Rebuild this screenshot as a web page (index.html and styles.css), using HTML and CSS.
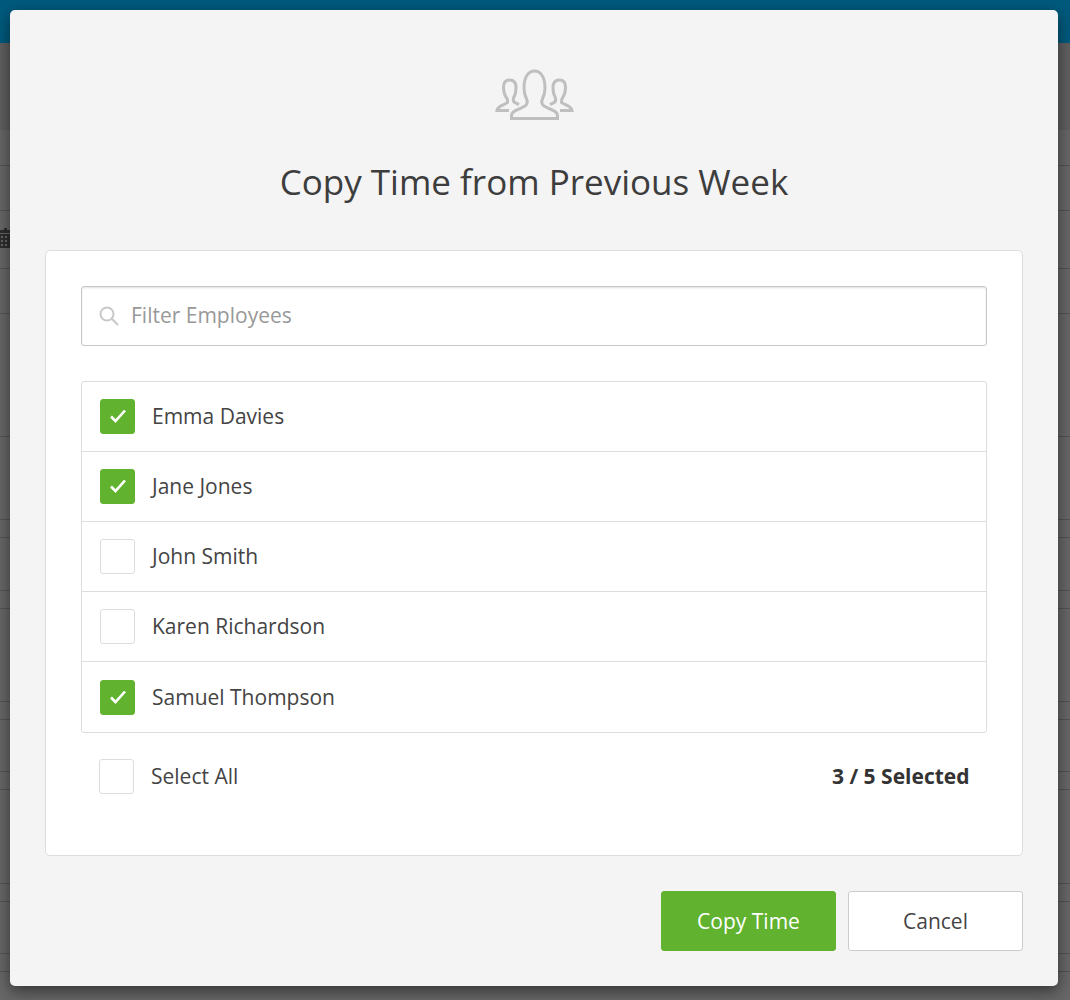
FILE: index.html
```html
<!DOCTYPE html>
<html lang="en">
<head>
<meta charset="UTF-8">
<meta name="viewport" content="width=device-width, initial-scale=1.0">
<title>Copy Time from Previous Week</title>
<link rel="stylesheet" href="styles.css">
</head>
<body>

<!-- Page behind the dialog, dimmed -->
<div class="backdrop">
    <div class="top-bar"></div>
    <div class="toolbar"></div>
    <div class="rows">
        <div></div>
        <div></div>
        <div class="row-calendar">
            <svg class="calendar-icon" viewBox="0 0 10 20">
                <rect x="4" y="0" width="3" height="3"></rect>
                <rect x="0" y="2" width="10" height="3"></rect>
                <path d="M0 6h10v14H0zM1 8v2h2V8zm4 0v2h2V8zM1 12v2h2v-2zm4 0v2h2v-2zM1 16v2h2v-2zm4 0v2h2v-2z" fill-rule="evenodd"></path>
            </svg>
        </div>
        <div></div><div></div><div></div><div></div><div></div><div></div>
        <div></div><div></div><div></div><div></div><div></div><div></div>
        <div></div><div></div><div></div>
    </div>
</div>

<div class="modal">
    <svg class="modal-icon" viewBox="-1 0 80 52">
        <path d="M16.500 49.500H62.500V46.500C62.500 43 59 41.500 55 40L49 37C47 35.500 46 33 47.500 30C49 27 50 24 50 19C50 7 45 2 39.500 2C34 2 29 7 29 19C29 24 30 27 31.500 30C33 33 32 35.500 30 37L24 40C20 41.500 16.500 43 16.500 46.500Z"></path>
        <path d="M14 41.500H2C2.500 38.500 5 37 9 35.500L12.500 33.500C13 31.500 12.500 30 11 28C9 25 8.500 21 8.500 18C8.500 13 10.500 11 14.500 11C18.500 11 21 13.500 21 18.500C21 22.500 20 26.500 18.500 29C18 31 18.500 33 20.500 34L24 35.500"></path>
        <path d="M65 41.500H77C76.500 38.500 74 37 70 35.500L66.500 33.500C66 31.500 66.500 30 68 28C70 25 70.500 21 70.500 18C70.500 13 68.500 11 64.500 11C60.500 11 58 13.500 58 18.500C58 22.500 59 26.500 60.500 29C61 31 60.500 33 58.500 34L55 35.500"></path>
    </svg>
    <h1 class="modal-title">Copy Time from Previous Week</h1>

    <div class="panel">
        <div class="filter">
            <svg class="search-icon" viewBox="0 0 20 20">
                <circle cx="8" cy="8" r="6.500"></circle>
                <path d="M12.800 12.800L19 19"></path>
            </svg>
            <input class="filter-input" type="text" placeholder="Filter Employees">
        </div>

        <ul class="employee-list">
            <li class="employee">
                <span class="check checked"><svg viewBox="0 1 16 14"><path d="M1 7.500L5.500 12L15 1.500"></path></svg></span>
                <span class="label">Emma Davies</span>
            </li>
            <li class="employee">
                <span class="check checked"><svg viewBox="0 1 16 14"><path d="M1 7.500L5.500 12L15 1.500"></path></svg></span>
                <span class="label">Jane Jones</span>
            </li>
            <li class="employee">
                <span class="check"></span>
                <span class="label">John Smith</span>
            </li>
            <li class="employee">
                <span class="check"></span>
                <span class="label">Karen Richardson</span>
            </li>
            <li class="employee">
                <span class="check checked"><svg viewBox="0 1 16 14"><path d="M1 7.500L5.500 12L15 1.500"></path></svg></span>
                <span class="label">Samuel Thompson</span>
            </li>
        </ul>

        <div class="select-all">
            <span class="check"></span>
            <span class="label">Select All</span>
            <span class="label selected-count">3 / 5 Selected</span>
        </div>
    </div>

    <div class="actions">
        <button class="btn btn-primary">Copy Time</button>
        <button class="btn btn-default">Cancel</button>
    </div>
</div>

</body>
</html>
```

FILE: styles.css
```css
* {
    box-sizing: border-box;
}
body {
    font-family: "Open Sans", "Liberation Sans", sans-serif;
    margin: 0;
    height: 1000px;
    overflow: hidden;
    background-color: #676767;
    color: #444;
}

/* dimmed page */
.top-bar {
    height: 43px;
    background-color: #005a7d;
}
.toolbar {
    height: 87px;
    background-color: #5f5f5f;
}
.rows {
    display: grid;
    grid-template-rows: 36px 45px 58px 45px 123px 83px 18px 53px 18px 93px 18px 52px 18px 94px 18px 52px 18px 28px;
}
.rows div {
    border-bottom: 1px solid #535353;
}
.rows div:last-child {
    border-bottom: 0;
}
.row-calendar {
    display: flex;
    align-items: flex-start;
    padding-top: 17px;
}
.calendar-icon {
    width: 10px;
    height: 20px;
    fill: #2e2e2e;
}

/* dialog */
.modal {
    position: absolute;
    top: 10px;
    left: 10px;
    width: 1048px;
    height: 976px;
    padding: 59px 35px 35px;
    background-color: #f4f4f4;
    border-radius: 5px;
    box-shadow: 0 5px 15px rgba(0, 0, 0, 0.5);
}
.modal-icon {
    display: block;
    width: 80px;
    height: 52px;
    margin: 0 auto;
    fill: none;
    stroke: #bfbfbf;
    stroke-width: 3;
}
.modal-title {
    margin: 38px 0 45px;
    font-size: 35px;
    line-height: 46px;
    font-weight: 400;
    text-align: center;
    color: #3d3d3d;
}
.panel {
    height: 606px;
    padding: 35px;
    background-color: #fff;
    border: 1px solid #ddd;
    border-radius: 5px;
}
.filter {
    position: relative;
}
.search-icon {
    position: absolute;
    top: 20px;
    left: 18px;
    width: 20px;
    height: 20px;
    fill: none;
    stroke: #c8c8c8;
    stroke-width: 2;
}
.filter-input {
    display: block;
    width: 100%;
    height: 60px;
    padding: 0 20px 2px 49px;
    font-family: inherit;
    font-size: 21px;
    color: #444;
    background-color: #fff;
    border: 1px solid #c8c8c8;
    border-radius: 3px;
    box-shadow: inset 0 1px 2px rgba(0, 0, 0, 0.12);
}
.filter-input::placeholder {
    color: #999;
    opacity: 1;
}
.employee-list {
    list-style: none;
    margin: 35px 0 0;
    padding: 0;
    background-color: #fff;
    border: 1px solid #ddd;
    border-radius: 3px;
}
.employee {
    display: flex;
    align-items: center;
    gap: 17px;
    height: 70px;
    padding: 0 18px;
    font-size: 21px;
    border-bottom: 1px solid #ddd;
}
.employee:last-child {
    height: 70px;
    padding-top: 1px;
    border-bottom: 0;
}
.label {
    margin-bottom: 2px;
}
.check {
    display: flex;
    flex: none;
    align-items: center;
    justify-content: center;
    width: 35px;
    height: 35px;
    background-color: #fff;
    border: 1px solid #ddd;
    border-radius: 3px;
}
.check svg {
    width: 16px;
    height: 14px;
    fill: none;
    stroke: #fff;
    stroke-width: 2.6;
}
.checked {
    background-color: #60b22f;
    border-color: #60b22f;
}
.select-all {
    display: flex;
    align-items: center;
    gap: 17px;
    margin-top: 26px;
    padding: 0 17.5px 0 18px;
    font-size: 21px;
}
.selected-count {
    margin-left: auto;
    font-weight: 700;
    color: #333;
}

/* buttons */
.actions {
    display: flex;
    justify-content: flex-end;
    gap: 12px;
    margin-top: 35px;
}
.btn {
    width: 175px;
    height: 60px;
    padding: 0;
    font-family: inherit;
    font-size: 21px;
    border-radius: 3px;
}
.btn-primary {
    color: #fff;
    background-color: #60b22f;
    border: 1px solid #60b22f;
}
.btn-default {
    color: #444;
    background-color: #fff;
    border: 1px solid #ccc;
}
```
